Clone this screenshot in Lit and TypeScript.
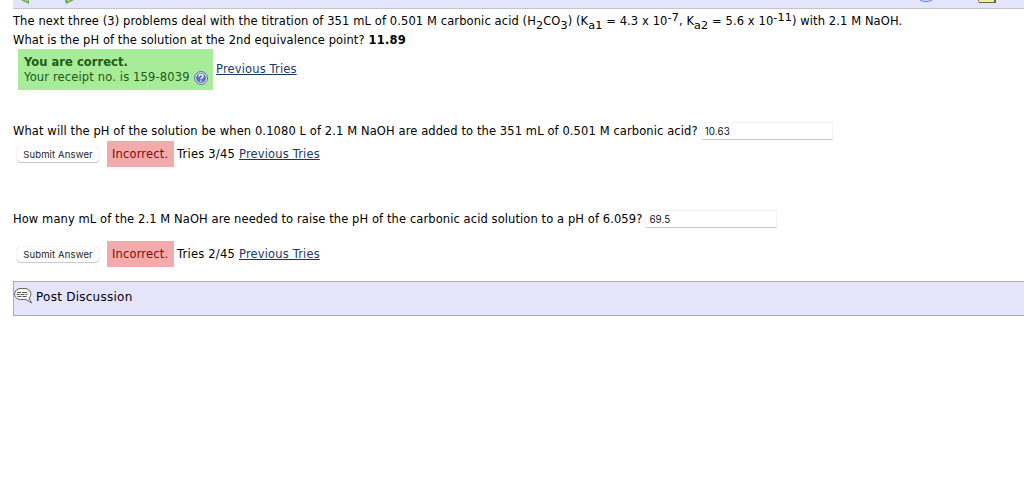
import { LitElement, html, css } from "lit";
import { customElement, property } from "lit/decorators.js";

/** Submit button, grading status and link to the earlier tries. */
@customElement("answer-status")
export class AnswerStatus extends LitElement {
  @property() tries = "";

  static styles = css`
    :host {
      display: flex;
      align-items: center;
      height: 26px;
      padding-left: 4px;
      letter-spacing: 0.16px;
    }

    button {
      width: 82px;
      height: 15px;
      margin: 0 8px 0 0;
      padding: 0;
      border: 0;
      border-radius: 4px;
      background: #fff;
      box-shadow: 0 0 1px rgba(0, 0, 0, 0.3), 0 1px 1px rgba(0, 0, 0, 0.2);
      color: #222;
      font: 9.5px/15px Inter, sans-serif;
      letter-spacing: 0.13px;
      white-space: nowrap;
    }

    .incorrect {
      box-sizing: border-box;
      width: 67px;
      height: 26px;
      margin-right: 3px;
      padding-left: 5px;
      background: #f3aaaa;
      color: #7d0c0c;
      line-height: 26px;
    }

    .tries {
      width: 58px;
      margin-right: 4px;
      letter-spacing: 0.22px;
    }

    a {
      color: #1a3867;
      text-decoration: underline;
    }
  `;

  render() {
    return html`
      <button>Submit Answer</button>
      <span class="incorrect">Incorrect.</span>
      <span class="tries">Tries ${this.tries}</span>
      <a>Previous Tries</a>
    `;
  }
}

@customElement("app-root")
export class AppRoot extends LitElement {
  static styles = css`
    :host {
      display: block;
      box-sizing: border-box;
      height: 499px;
      padding-left: 13px;
      overflow: hidden;
      background: #fff;
      color: #000;
      font: 11.5px/19px Verdana, "DejaVu Sans", sans-serif;
      letter-spacing: 0.1px;
      white-space: nowrap;
    }

    .toolbar {
      display: flex;
      box-sizing: border-box;
      height: 9px;
      border-bottom: 1px solid #c4c4c4;
      background: #e5e4fd;
    }

    .toolbar svg {
      display: block;
      flex: none;
    }

    .left {
      margin-right: auto;
    }

    .line {
      display: flex;
      align-items: center;
      height: 19px;
    }

    .intro {
      display: block;
      height: 19px;
      margin-top: 3px;
    }

    sub,
    sup {
      font-size: 11.2px;
      line-height: 0;
    }

    sub {
      vertical-align: -4px;
    }

    sup {
      vertical-align: 4px;
    }

    .equivalence {
      letter-spacing: 0.07px;
    }

    b {
      margin-left: 4px;
      letter-spacing: 0.2px;
    }

    .result {
      display: flex;
      align-items: center;
      height: 41px;
      margin-top: -1px;
      padding-left: 5px;
      letter-spacing: 0.15px;
    }

    .correct {
      box-sizing: border-box;
      width: 195px;
      height: 41px;
      margin-right: 3px;
      padding: 6px 0 0 6px;
      background: #a6ec99;
      color: #225a16;
      line-height: 15px;
    }

    .correct strong {
      display: block;
      letter-spacing: 0.05px;
    }

    .receipt {
      display: flex;
      align-items: center;
      height: 15px;
    }

    .receipt svg {
      margin-left: 4px;
    }

    a {
      color: #1a3867;
      text-decoration: underline;
    }

    .first {
      margin-top: 32px;
    }

    .second {
      margin-top: 43px;
    }

    .second span {
      letter-spacing: 0.09px;
    }

    .second + answer-status {
      margin-top: 12px;
    }

    input {
      box-sizing: border-box;
      width: 131px;
      height: 18px;
      margin: 0 0 2px 4px;
      padding: 2px 0 0 2px;
      border: 1px solid #f3f3f3;
      border-left-color: #fafafa;
      border-bottom-color: #c4c4c4;
      outline: none;
      color: #111;
      font: 9.8px Inter, sans-serif;
      letter-spacing: 0.1px;
    }

    .discussion {
      display: flex;
      box-sizing: border-box;
      height: 35px;
      margin-top: 14px;
      padding-top: 5px;
      border: 1px solid #86b4ee;
      border-right: 0;
      background: #e5e4fd;
      font-size: 12px;
      line-height: 20px;
      letter-spacing: 0.25px;
    }

    .discussion svg {
      margin-right: 4px;
    }
  `;

  render() {
    return html`
      <div class="toolbar">
        <svg class="left" width="80" height="8" viewBox="13 0 80 8">
          <path d="M21 0h8v4z" fill="#69a84a" />
          <path d="M24 0h4v2z" fill="#a5d977" />
          <path d="M65 0h9l-8 4z" fill="#69a84a" />
          <path d="M67 0h4l-3 2z" fill="#a5d977" />
        </svg>
        <svg width="124" height="8" viewBox="900 0 124 8">
          <path d="M920 0q6 3 12 0" fill="#dce7fb" stroke="#7694dc" stroke-width="1.3" />
          <path d="M978 0h18v3h-17z" fill="#666644" />
          <path d="M979 0h15v2h-15z" fill="#f4ee91" />
        </svg>
      </div>

      <div class="intro">
        The next three (3) problems deal with the titration of 351 mL of 0.501 M carbonic acid
        (H<sub>2</sub>CO<sub>3</sub>) (K<sub>a1</sub> = 4.3 x 10<sup>-7</sup>, K<sub>a2</sub> = 5.6 x
        10<sup>-11</sup>) with 2.1 M NaOH.
      </div>
      <div class="line">
        <span class="equivalence">What is the pH of the solution at the 2nd equivalence point?</span>
        <b>11.89</b>
      </div>
      <div class="result">
        <div class="correct">
          <strong>You are correct.</strong>
          <div class="receipt">
            <span>Your receipt no. is 159-8039</span>
            <svg width="14" height="14" viewBox="0 0 14 14">
              <circle cx="7" cy="7" r="6.4" fill="#e8eefc" stroke="#506a99" />
              <circle cx="7" cy="7" r="4.9" fill="#5675b7" />
              <path d="M5 5.5q0-2 2-2t2 1.7q0 1-1 1.5T7 8.3M7 9.4v1.4" fill="none" stroke="#fff" stroke-width="1.4" />
            </svg>
          </div>
        </div>
        <a>Previous Tries</a>
      </div>

      <div class="line first">
        <span>What will the pH of the solution be when 0.1080 L of 2.1 M NaOH are added to the 351 mL of 0.501 M carbonic acid?</span>
        <input .value=${"10.63"} />
      </div>
      <answer-status tries="3/45"></answer-status>

      <div class="line second">
        <span>How many mL of the 2.1 M NaOH are needed to raise the pH of the carbonic acid solution to a pH of 6.059?</span>
        <input .value=${"69.5"} />
      </div>
      <answer-status tries="2/45"></answer-status>

      <div class="discussion">
        <svg width="18" height="18" viewBox="0 0 18 18">
          <path d="M5 1.5h7q4.5 1 5 5 0 3-2 4.5l2.5 5-5.5-3.5H5Q.7 11 .5 7 .8 2.5 5 1.5z" fill="#f7f7ef" stroke="#666" />
          <path d="M3 5.5h4m1 0h5M2.500 7.5h3m1 0h4m1 0h2M3.5 9.5h4m1 0h4" fill="none" stroke="#555" />
        </svg>
        <span>Post Discussion</span>
      </div>
    `;
  }
}
